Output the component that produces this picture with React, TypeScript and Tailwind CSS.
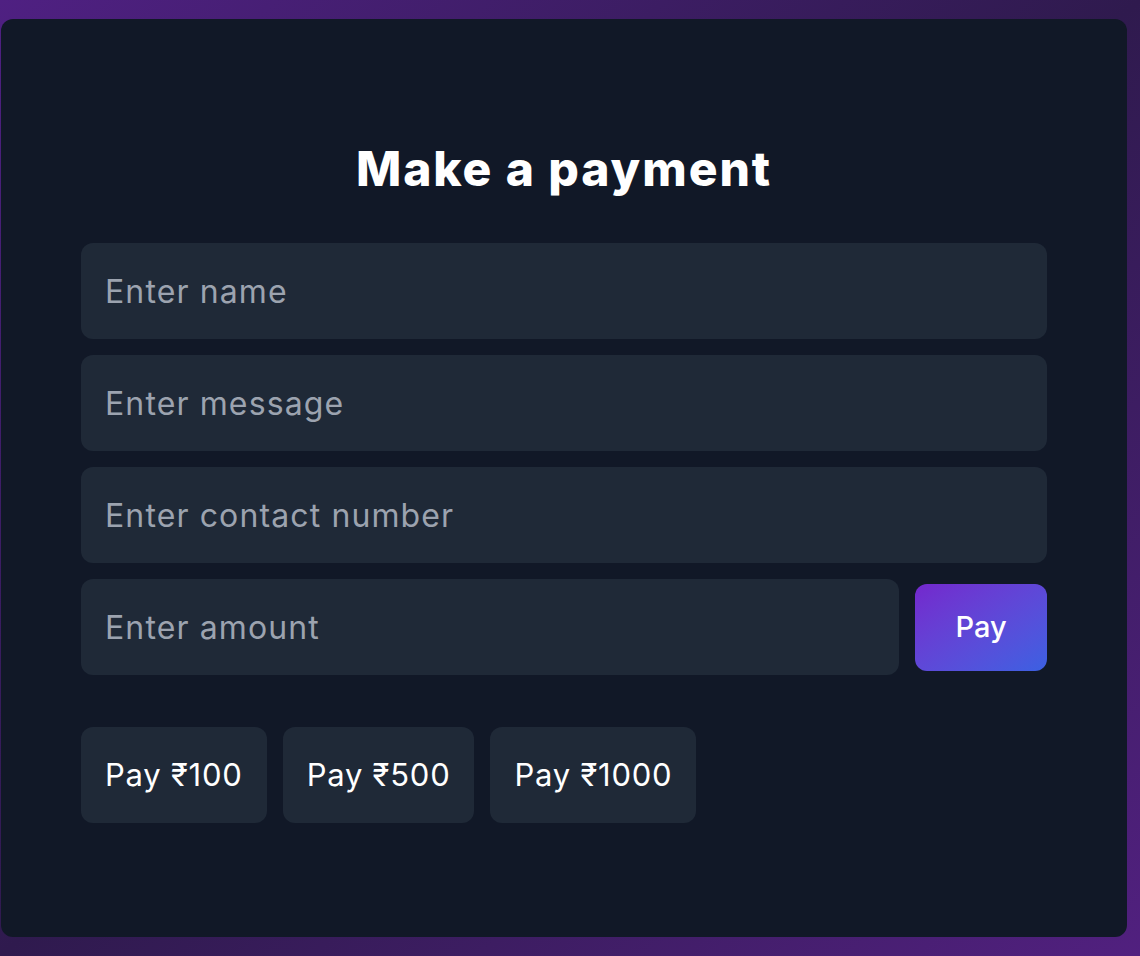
import React from 'react';

const PaymentForm = () => {
  const presets = [100, 500, 1000];
  const inputClass =
    'w-full h-24 rounded-xl bg-[#1f2937] px-6 text-[32px] tracking-[0.035em] text-white placeholder:text-[#9ca3af] outline-none';

  return (
    <div className="min-h-screen bg-gradient-to-br from-[#4f2082] via-[#2f1a4e] to-[#51207f] pt-[19px] pb-[19px] pl-[1px] pr-[13px] font-['Inter',sans-serif]">
      <div className="h-[918px] rounded-xl bg-[#111827] px-20 pt-[126px]">
        <h2 className="text-center text-5xl font-extrabold leading-none tracking-[0.04em] text-white">
          Make a payment
        </h2>

        <div className="mt-[50px] flex flex-col gap-4">
          <input type="text" placeholder="Enter name" className={inputClass} />
          <input type="text" placeholder="Enter message" className={inputClass} />
          <input type="text" placeholder="Enter contact number" className={inputClass} />

          <div className="flex items-center gap-4">
            <input type="text" placeholder="Enter amount" className={inputClass + ' flex-1'} />
            <button className="h-[87px] w-[132px] shrink-0 rounded-xl bg-gradient-to-br from-[#7327cd] to-[#3a60e2] text-[29px] font-medium text-white">
              Pay
            </button>
          </div>
        </div>

        {/* Quick amounts */}
        <div className="mt-[52px] flex gap-4">
          {presets.map((amount) => (
            <button
              key={amount}
              className="h-24 rounded-xl bg-[#1f2937] px-6 text-[31px] tracking-[0.025em] text-white"
            >
              Pay ₹{amount}
            </button>
          ))}
        </div>
      </div>
    </div>
  );
};

export default PaymentForm;
